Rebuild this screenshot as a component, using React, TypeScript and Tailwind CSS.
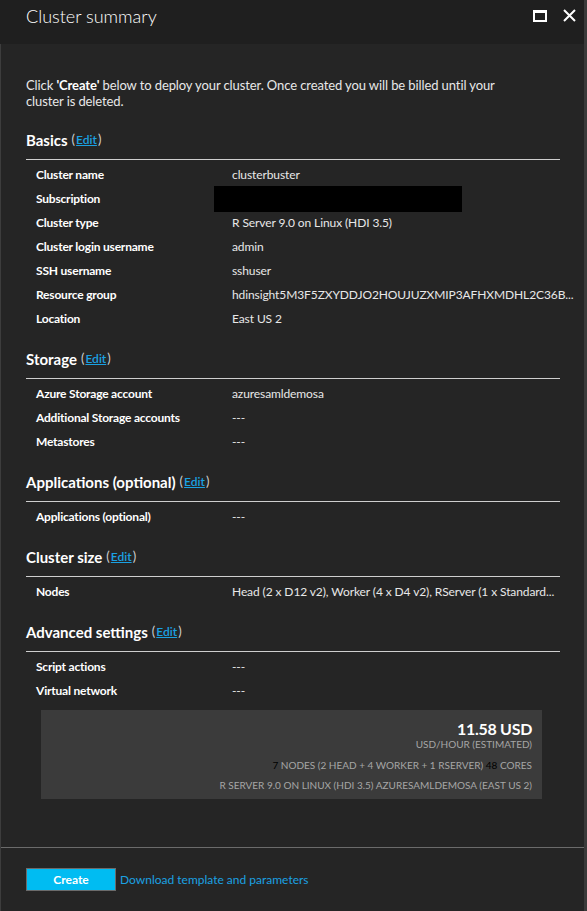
const FONT = "font-['Lato','Open_Sans',sans-serif]";

type Row = { label: string; value?: string; redacted?: boolean };

const sections: { title: string; rows: Row[] }[] = [
  {
    title: "Basics",
    rows: [
      { label: "Cluster name", value: "clusterbuster" },
      { label: "Subscription", redacted: true },
      { label: "Cluster type", value: "R Server 9.0 on Linux (HDI 3.5)" },
      { label: "Cluster login username", value: "admin" },
      { label: "SSH username", value: "sshuser" },
      { label: "Resource group", value: "hdinsight5M3F5ZXYDDJO2HOUJUZXMIP3AFHXMDHL2C36B..." },
      { label: "Location", value: "East US 2" },
    ],
  },
  {
    title: "Storage",
    rows: [
      { label: "Azure Storage account", value: "azuresamldemosa" },
      { label: "Additional Storage accounts", value: "---" },
      { label: "Metastores", value: "---" },
    ],
  },
  {
    title: "Applications (optional)",
    rows: [{ label: "Applications (optional)", value: "---" }],
  },
  {
    title: "Cluster size",
    rows: [
      { label: "Nodes", value: "Head (2 x D12 v2), Worker (4 x D4 v2), RServer (1 x Standard..." },
    ],
  },
  {
    title: "Advanced settings",
    rows: [
      { label: "Script actions", value: "---" },
      { label: "Virtual network", value: "---" },
    ],
  },
];

function Section({ title, rows, first }: { title: string; rows: Row[]; first?: boolean }) {
  return (
    <div className={first ? "" : "mt-[18px]"}>
      <div className="flex h-[20px] items-center text-[15px] font-bold text-white">
        <span>{title}</span>
        <span className="ml-1 text-[13px] font-normal text-[#cfcfcf]">(</span>
        <a className="mx-px text-[12px] font-semibold text-[#1ba1e2] underline">Edit</a>
        <span className="text-[13px] font-normal text-[#cfcfcf]">)</span>
      </div>
      <div className="h-[10px] border-b border-[#cfcfcf]" />
      <div className="pt-[3px]">
        {rows.map((r) => (
          <div key={r.label} className="flex h-[24px] items-center text-[12px]">
            <div className="w-[206px] shrink-0 pl-[10px] font-bold tracking-[-0.2px] text-white">{r.label}</div>
            {r.redacted ? (
              <div className="ml-[-18px] h-[26px] w-[248px] bg-black" />
            ) : (
              <div className="whitespace-nowrap tracking-[-0.1px] text-[#e8e8e8]">{r.value}</div>
            )}
          </div>
        ))}
      </div>
    </div>
  );
}

export default function App() {
  return (
    <div className={`flex h-[911px] w-[587px] ${FONT}`}>
      <div className="flex w-[584px] flex-col bg-[#252525]">
        <div className="flex h-[44px] shrink-0 items-start justify-between bg-[#1f1f1f] pl-[26px] pr-[8px] pt-[3px]">
          <h1 className="text-[18px] font-light text-white">Cluster summary</h1>
          <div className="mt-[6px] flex items-center gap-[16px]">
            <div className="h-[12px] w-[14px] border-x-2 border-b-2 border-t-[3px] border-white" />
            <svg width="13" height="13" viewBox="0 0 13 13">
              <path d="M1 1L12 12M12 1L1 12" stroke="white" strokeWidth="2" />
            </svg>
          </div>
        </div>
        <div className="flex flex-1 flex-col border-l border-[#3d3d3d]">
          <div className="pl-[25px] pr-[24px] pt-[33px]">
            <p className="max-w-[478px] text-[13px] leading-[16px] tracking-[-0.1px] text-[#e8e8e8]">
              Click <b className="text-white">'Create'</b> below to deploy your cluster. Once created you will be billed
              until your cluster is deleted.
            </p>
            <div className="mt-[21px]">
              {sections.map((s, i) => (
                <Section key={s.title} title={s.title} rows={s.rows} first={i === 0} />
              ))}
            </div>
            <div className="ml-[15px] mr-[18px] mt-[7px] flex h-[89px] flex-col items-end bg-[#3b3b3b] pr-[10px] pt-[10px] text-right">
              <div className="text-[16px] font-bold leading-[18px] tracking-[-0.3px] text-white">11.58 USD</div>
              <div className="text-[10px] leading-[12px] text-[#a6a6a6]">USD/HOUR (ESTIMATED)</div>
              <div className="mt-[9px] text-[10px] leading-[12px] text-[#a6a6a6]">
                <span className="text-black">7</span> NODES (2 HEAD + 4 WORKER + 1 RSERVER){" "}
                <span className="text-black">48</span> CORES
              </div>
              <div className="mt-[8px] text-[10px] leading-[12px] text-[#a6a6a6]">
                R SERVER 9.0 ON LINUX (HDI 3.5) AZURESAMLDEMOSA (EAST US 2)
              </div>
            </div>
          </div>
          <div className="mt-auto border-t border-[#6b6b6b] px-[25px] pb-[20px] pt-[20px]">
            <div className="flex items-center gap-[4px]">
              <button className="h-[23px] w-[90px] border border-[#6b6b6b] bg-[#00bcf2] text-[12px] font-bold text-white">
                Create
              </button>
              <a className="text-[12px] text-[#1ba1e2]">Download template and parameters</a>
            </div>
          </div>
        </div>
      </div>
      <div className="w-[3px] bg-[#3a3a3a]" />
    </div>
  );
}
